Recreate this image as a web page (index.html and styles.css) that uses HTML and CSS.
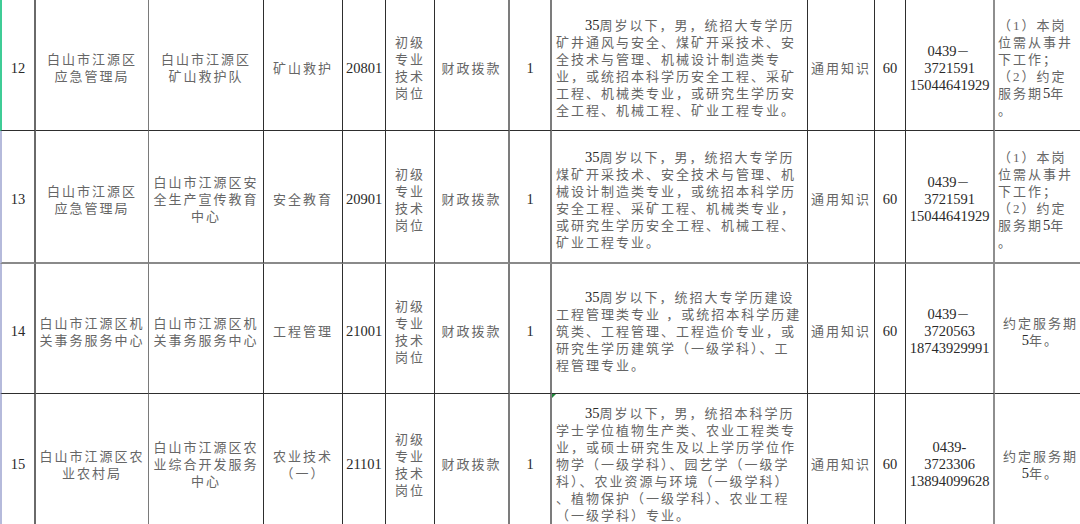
FILE: index.html
```html
<!DOCTYPE html>
<html lang="zh-CN">
<head>
<meta charset="utf-8">
<title>岗位表</title>
<link rel="stylesheet" href="styles.css">
</head>
<body>
<table class="sheet">
  <colgroup>
    <col class="c0"><col class="c1"><col class="c2"><col class="c3"><col class="c4"><col class="c5"><col class="c6"><col class="c7"><col class="c8"><col class="c9"><col class="c10"><col class="c11"><col class="c12">
  </colgroup>
  <tbody>
    <tr class="r12">
      <td class="idx first"><span class="n">12</span></td>
      <td class="g1">白山市江源区<br>应急管理局</td>
      <td>白山市江源区<br>矿山救护队</td>
      <td>矿山救护</td>
      <td><span class="n">20801</span></td>
      <td>初级<br>专业<br>技术<br>岗位</td>
      <td class="g2">财政拨款</td>
      <td class="g2"><span class="n">1</span></td>
      <td class="desc"><span class="ind"><span class="n">35</span>周岁以下，男，统招大专学历</span><br>矿井通风与安全、煤矿开采技术、安<br>全技术与管理、机械设计制造类专<br>业，或统招本科学历安全工程、采矿<br>工程、机械类专业，或研究生学历安<br>全工程、机械工程、矿业工程专业。</td>
      <td>通用知识</td>
      <td><span class="n">60</span></td>
      <td class="g3"><span class="n">0439</span>－<br><span class="n">3721591</span><br><span class="n">15044641929</span></td>
      <td class="note">（1）本岗<br>位需从事井<br>下工作；<br>（2）约定<br>服务期<span class="n">5</span>年<br>。</td>
    </tr>
    <tr class="r13">
      <td class="idx"><span class="n">13</span></td>
      <td class="g1">白山市江源区<br>应急管理局</td>
      <td>白山市江源区安<br>全生产宣传教育<br>中心</td>
      <td>安全教育</td>
      <td><span class="n">20901</span></td>
      <td>初级<br>专业<br>技术<br>岗位</td>
      <td class="g2">财政拨款</td>
      <td class="g2"><span class="n">1</span></td>
      <td class="desc"><span class="ind"><span class="n">35</span>周岁以下，男，统招大专学历</span><br>煤矿开采技术、安全技术与管理、机<br>械设计制造类专业，或统招本科学历<br>安全工程、采矿工程、机械类专业，<br>或研究生学历安全工程、机械工程、<br>矿业工程专业。</td>
      <td>通用知识</td>
      <td><span class="n">60</span></td>
      <td class="g3"><span class="n">0439</span>－<br><span class="n">3721591</span><br><span class="n">15044641929</span></td>
      <td class="note">（1）本岗<br>位需从事井<br>下工作；<br>（2）约定<br>服务期<span class="n">5</span>年<br>。</td>
    </tr>
    <tr class="r14">
      <td class="idx"><span class="n">14</span></td>
      <td class="g1">白山市江源区机<br>关事务服务中心</td>
      <td>白山市江源区机<br>关事务服务中心</td>
      <td>工程管理</td>
      <td><span class="n">21001</span></td>
      <td>初级<br>专业<br>技术<br>岗位</td>
      <td class="g2">财政拨款</td>
      <td class="g2"><span class="n">1</span></td>
      <td class="desc"><span class="ind"><span class="n">35</span>周岁以下，统招大专学历建设</span><br>工程管理类专业 ，或统招本科学历建<br>筑类、工程管理、工程造价专业，或<br>研究生学历建筑学（一级学科）、工<br>程管理专业。</td>
      <td>通用知识</td>
      <td><span class="n">60</span></td>
      <td class="g3"><span class="n">0439</span>－<br><span class="n">3720563</span><br><span class="n">18743929991</span></td>
      <td>约定服务期<br><span class="n">5</span>年。</td>
    </tr>
    <tr class="r15">
      <td class="idx"><span class="n">15</span></td>
      <td class="g1">白山市江源区农<br>业农村局</td>
      <td>白山市江源区农<br>业综合开发服务<br>中心</td>
      <td>农业技术<br>（一）</td>
      <td><span class="n">21101</span></td>
      <td>初级<br>专业<br>技术<br>岗位</td>
      <td class="g2">财政拨款</td>
      <td class="g2"><span class="n">1</span></td>
      <td class="desc flag"><span class="ind"><span class="n">35</span>周岁以下，男，统招本科学历</span><br>学士学位植物生产类、农业工程类专<br>业，或硕士研究生及以上学历学位作<br>物学（一级学科）、园艺学（一级学<br>科）、农业资源与环境（一级学科）<br>、植物保护（一级学科）、农业工程<br>（一级学科）专业。</td>
      <td>通用知识</td>
      <td><span class="n">60</span></td>
      <td class="g3"><span class="n">0439-</span><br><span class="n">3723306</span><br><span class="n">13894099628</span></td>
      <td>约定服务期<br><span class="n">5</span>年。</td>
    </tr>
  </tbody>
</table>
</body>
</html>
```

FILE: styles.css
```css
html, body {
  margin: 0;
  padding: 0;
  background: #ffffff;
  overflow: hidden;
}

.sheet {
  width: 1087px;
  border-collapse: separate;
  border-spacing: 0;
  table-layout: fixed;
  font-family: "Liberation Serif", "Noto Sans CJK SC", serif;
  font-size: 13px;
  letter-spacing: 2px;
  line-height: 17px;
  color: #666666;
}

.c0 { width: 36px; }
.c1 { width: 113px; }
.c2 { width: 115px; }
.c3 { width: 79px; }
.c4 { width: 43px; }
.c5 { width: 49px; }
.c6 { width: 75px; }
.c7 { width: 42px; }
.c8 { width: 256px; }
.c9 { width: 67px; }
.c10 { width: 31px; }
.c11 { width: 89px; }
.c12 { width: 92px; }

.sheet td {
  border-right: 1px solid #2e2e2e;
  border-bottom: 1px solid #2e2e2e;
  text-align: center;
  vertical-align: middle;
  padding: 6px 0 0 0;
  white-space: nowrap;
  overflow: hidden;
}

.r12 { height: 131px; }
.r13 { height: 133px; }
.r14 { height: 130px; }
.r15 { height: 136px; }

.r13 td { border-bottom: 2px solid #8a8a8a; }

.sheet td.idx {
  border-left: 2px solid #b5badb;
  border-right: 2px solid #6a6a6a;
}
.sheet td.idx.first { border-left-color: #3fcc96; }

.sheet td.g1 { border-right-color: #7a7a7a; }
.sheet td.g2 { border-right: 2px solid #7c7c7c; }
.sheet td.g3 { border-right: 2px solid #8e8e8e; }

.n {
  font-size: 14.5px;
  letter-spacing: 0;
  color: #2a2a2a;
}

.sheet td.desc {
  text-align: left;
  padding-left: 4px;
}
.ind { padding-left: 29px; }

.sheet td.note {
  text-align: left;
  padding-left: 3px;
}

.flag { position: relative; }
.flag::before {
  content: "";
  position: absolute;
  left: 0;
  top: 0;
  border-top: 4px solid #1f8a3a;
  border-right: 4px solid transparent;
}
```
